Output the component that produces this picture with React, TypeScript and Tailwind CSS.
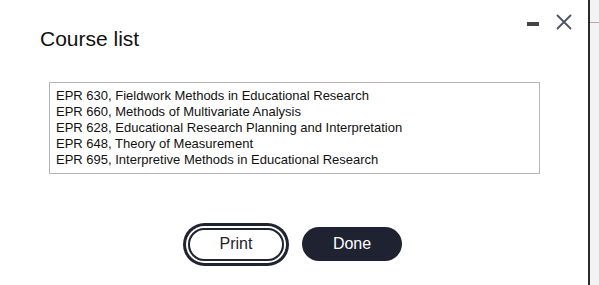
import React from "react";

const courses = [
  "EPR 630, Fieldwork Methods in Educational Research",
  "EPR 660, Methods of Multivariate Analysis",
  "EPR 628, Educational Research Planning and Interpretation",
  "EPR 648, Theory of Measurement",
  "EPR 695, Interpretive Methods in Educational Research",
];

const App = () => {
  return (
    <div className="flex w-[599px] h-[285px] overflow-hidden bg-[#f3f3f3] font-['Liberation_Sans',Arial,sans-serif]">
      {/* Dialog */}
      <div className="w-[590px] h-[300px] -mt-[10px] shrink-0 bg-white border-r-2 border-t-2 border-[#2b2b2b] rounded-tr-[10px] flex flex-col">
        <div className="flex items-start justify-between pl-[40px] pr-[16px] pt-[22px]">
          <h1 className="text-[21px] leading-[24px] text-[#111] mt-[13px]">Course list</h1>
          <div className="flex items-center gap-[17px]">
            <button className="w-[12px] h-[4px] bg-[#444] mt-[4px]" aria-label="Minimize" />
            <button aria-label="Close" className="block">
              <svg width="16" height="16" viewBox="0 0 16 16" fill="none" stroke="#4b5262" strokeWidth="1.8" strokeLinecap="round">
                <path d="M1.5 1.5 L14.5 14.5 M14.5 1.5 L1.5 14.5" />
              </svg>
            </button>
          </div>
        </div>

        <div className="ml-[49px] mt-[31px] w-[491px] h-[92px] border border-[#b5b5b5] px-[6px] pt-[5px]">
          {courses.map((c) => (
            <div key={c} className="text-[13px] leading-[16px] text-[#111]">
              {c}
            </div>
          ))}
        </div>

        <div className="flex items-center justify-center gap-[18px] mt-[53px] pl-[2px]">
          <button className="w-[96px] h-[33px] rounded-full border-2 border-[#1f2430] text-[16px] text-[#1f2430] shadow-[0_0_0_2px_white,0_0_0_5px_#1f2430]">
            Print
          </button>
          <button className="w-[100px] h-[34px] rounded-full bg-[#1e2231] text-[16px] text-white">
            Done
          </button>
        </div>
      </div>
      {/* Backdrop strip */}
      <div className="flex-1 pt-[22px]">
        <div className="h-px bg-[#c9a0a8]" />
      </div>
    </div>
  );
};

export default App;
